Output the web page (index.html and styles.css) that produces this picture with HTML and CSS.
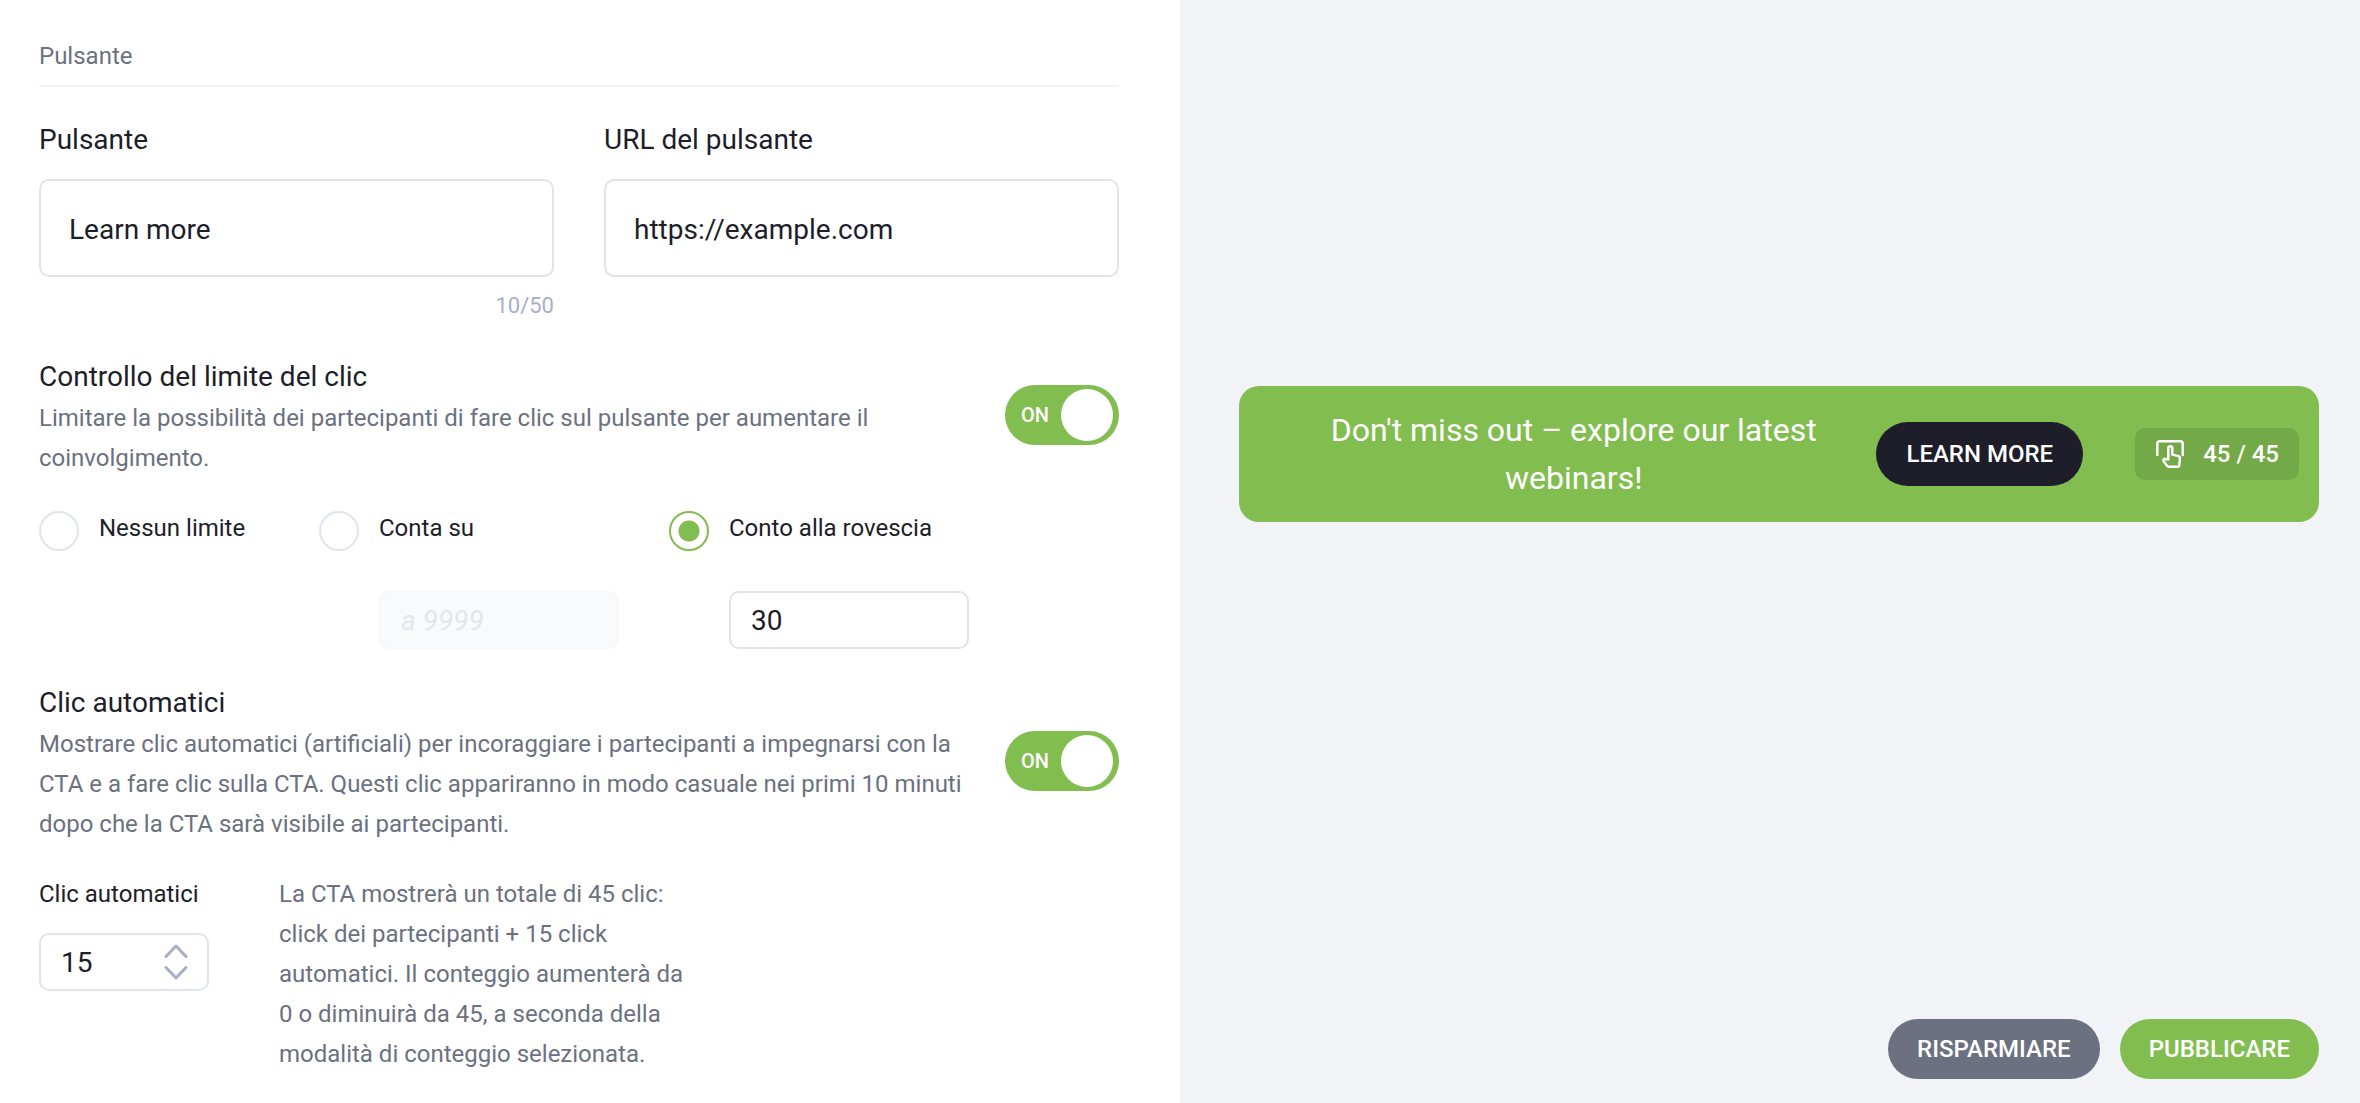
FILE: index.html
```html
<!DOCTYPE html>
<html lang="it">
<head>
<meta charset="utf-8">
<meta name="viewport" content="width=device-width, initial-scale=1">
<title>Pulsante CTA</title>
<link rel="stylesheet" href="styles.css">
</head>
<body>
<div class="layout">
  <main class="settings">
    <h1 class="section-title">Pulsante</h1>

    <div class="fields">
      <div class="field">
        <label class="field-label" for="btn-text">Pulsante</label>
        <input class="input input-large" id="btn-text" type="text" value="Learn more" maxlength="50">
        <p class="counter">10/50</p>
      </div>
      <div class="field">
        <label class="field-label" for="btn-url">URL del pulsante</label>
        <input class="input input-large" id="btn-url" type="text" value="https://example.com">
      </div>
    </div>

    <section class="option">
      <div class="option-text">
        <h2 class="option-title" id="limit-title">Controllo del limite del clic</h2>
        <p class="note">Limitare la possibilità dei partecipanti di fare clic sul pulsante per aumentare il coinvolgimento.</p>
      </div>
      <label class="toggle">
        <input class="toggle-input" type="checkbox" role="switch" aria-labelledby="limit-title" checked>
        <span class="toggle-text">ON</span>
        <span class="toggle-knob"></span>
      </label>
    </section>

    <div class="modes">
      <div class="mode">
        <input class="radio" type="radio" name="mode" id="mode-none">
        <label class="mode-label" for="mode-none">Nessun limite</label>
      </div>
      <div class="mode">
        <input class="radio" type="radio" name="mode" id="mode-up">
        <label class="mode-label" for="mode-up">Conta su</label>
        <input class="input input-small mode-value" type="text" placeholder="a 9999" aria-label="Conta su" disabled>
      </div>
      <div class="mode">
        <input class="radio" type="radio" name="mode" id="mode-down" checked>
        <label class="mode-label" for="mode-down">Conto alla rovescia</label>
        <input class="input input-small mode-value" type="text" value="30" aria-label="Conto alla rovescia">
      </div>
    </div>

    <section class="option">
      <div class="option-text">
        <h2 class="option-title" id="auto-title">Clic automatici</h2>
        <p class="note">Mostrare clic automatici (artificiali) per incoraggiare i partecipanti a impegnarsi con la CTA e a fare clic sulla CTA. Questi clic appariranno in modo casuale nei primi 10 minuti dopo che la CTA sarà visibile ai partecipanti.</p>
      </div>
      <label class="toggle">
        <input class="toggle-input" type="checkbox" role="switch" aria-labelledby="auto-title" checked>
        <span class="toggle-text">ON</span>
        <span class="toggle-knob"></span>
      </label>
    </section>

    <div class="auto">
      <div class="auto-field">
        <label class="auto-label" for="auto-clicks">Clic automatici</label>
        <div class="stepper">
          <input class="stepper-input" id="auto-clicks" type="text" inputmode="numeric" value="15">
          <div class="stepper-buttons">
            <button class="stepper-button" type="button" aria-label="Aumenta">
              <svg width="24" height="14" viewBox="0 0 24 14"><path d="M2 12.500 12 2l10 10.500"/></svg>
            </button>
            <button class="stepper-button" type="button" aria-label="Diminuisci">
              <svg width="24" height="14" viewBox="0 0 24 14"><path d="M2 1.500 12 12l10-10.500"/></svg>
            </button>
          </div>
        </div>
      </div>
      <p class="note auto-note">La CTA mostrerà un totale di 45 clic: click dei partecipanti + 15 click automatici. Il conteggio aumenterà da 0 o diminuirà da 45, a seconda della modalità di conteggio selezionata.</p>
    </div>
  </main>

  <aside class="preview">
    <div class="banner">
      <p class="banner-text">Don't miss out – explore our latest webinars!</p>
      <button class="banner-button" type="button">LEARN MORE</button>
      <div class="clicks">
        <svg class="clicks-icon" width="30" height="30" viewBox="0 0 30 30" aria-hidden="true">
          <path d="M2.300 16V4.600a2.300 2.300 0 0 1 2.300-2.300h20.800a2.300 2.300 0 0 1 2.300 2.300V16"/>
          <path d="M13.300 20.500V9.300a2 2 0 0 1 4 0v6.200l5.600 1.400a2.500 2.500 0 0 1 2 2.700l-.6 6.700a1.700 1.700 0 0 1-1.700 1.500h-8.300a3 3 0 0 1-2.200-1l-3.300-4.200a1.600 1.600 0 0 1 2.100-2.400z"/>
        </svg>
        <span>45 / 45</span>
      </div>
    </div>
    <div class="actions">
      <button class="action action-save" type="button">RISPARMIARE</button>
      <button class="action action-publish" type="button">PUBBLICARE</button>
    </div>
  </aside>
</div>
</body>
</html>
```
FILE: styles.css
```css
:root {
  --green: #82bd50;
  --ink: #1d1e2a;
  --muted: #6b7181;
  --line: #e1e3ee;
  --pale: #a8aec8;
  --canvas: #f1f3f7;
}

*,
*::before,
*::after {
  box-sizing: border-box;
}

body {
  margin: 0;
  background: #fff;
  color: var(--ink);
  font-family: Roboto, "Liberation Sans", sans-serif;
  font-size: 24px;
  line-height: 40px;
}

h1,
h2,
p {
  margin: 0;
  font-weight: 400;
}

input,
button {
  margin: 0;
  font-family: inherit;
}

button {
  border: 0;
  cursor: pointer;
}

.layout {
  display: grid;
  grid-template-columns: 1fr 1fr;
  min-height: 100vh;
}

.settings {
  padding: 36px 61px 24px 39px;
}

.section-title {
  padding-bottom: 9px;
  border-bottom: 2px solid var(--canvas);
  color: var(--muted);
  font-size: 24px;
}

/* Text fields */

.fields {
  display: grid;
  grid-template-columns: 1fr 1fr;
  gap: 50px;
  margin-top: 32px;
}

.field-label,
.option-title {
  display: block;
  font-size: 28px;
  line-height: 42px;
}

.input {
  display: block;
  width: 100%;
  border: 2px solid var(--line);
  border-radius: 10px;
  background: #fff;
  color: var(--ink);
  font-size: 28px;
}

.input-large {
  height: 98px;
  margin-top: 18px;
  padding: 2px 28px 0;
}

.input-small {
  height: 58px;
  padding: 0 20px;
}

.input:disabled {
  border-color: #f6f7f9;
  background: #f9fafc;
}

.input::placeholder {
  color: #e4e6ec;
  font-style: italic;
}

.counter {
  margin-top: 9px;
  color: var(--pale);
  font-size: 22px;
  text-align: right;
}

/* Options with a switch */

.option {
  display: flex;
  align-items: center;
  justify-content: space-between;
  gap: 32px;
  margin-top: 30px;
}

.option-text {
  max-width: 934px;
}

.note {
  color: var(--muted);
}

.toggle {
  display: flex;
  flex: none;
  align-items: center;
  justify-content: space-between;
  width: 114px;
  height: 60px;
  margin-bottom: 4px;
  padding: 0 6px 0 16px;
  border-radius: 30px;
  background: var(--green);
  color: #fff;
  font-size: 20px;
  font-weight: 500;
  cursor: pointer;
}

.toggle-input {
  position: absolute;
  opacity: 0;
}

.toggle-knob {
  width: 52px;
  height: 52px;
  border-radius: 50%;
  background: #fff;
}

/* Limit modes */

.modes {
  display: grid;
  grid-template-columns: 230px 300px 300px;
  gap: 50px;
  margin-top: 30px;
  padding-bottom: 3px;
}

.mode {
  display: grid;
  grid-template-columns: 40px 1fr;
  gap: 40px 20px;
  align-content: start;
}

.radio {
  appearance: none;
  width: 40px;
  height: 40px;
  margin-top: 3px;
  border: 2px solid var(--line);
  border-radius: 50%;
  background: #fff;
}

.radio:checked {
  border-color: var(--green);
  background: radial-gradient(circle, var(--green) 10px, #fff 11px);
}

.mode-label {
  height: 40px;
}

.mode-value {
  grid-column: 2;
}

/* Automatic clicks */

.auto {
  display: flex;
  gap: 70px;
  margin-top: 30px;
}

.auto-field {
  width: 170px;
}

.auto-label {
  display: block;
}

.auto-note {
  max-width: 410px;
}

.stepper {
  display: flex;
  align-items: center;
  height: 58px;
  margin-top: 19px;
  padding: 0 19px 0 20px;
  border: 2px solid var(--line);
  border-radius: 10px;
}

.stepper-input {
  flex: 1;
  min-width: 0;
  padding: 0;
  border: 0;
  background: none;
  color: var(--ink);
  font-size: 28px;
}

.stepper-buttons {
  display: grid;
  gap: 8px;
}

.stepper-button {
  display: block;
  height: 14px;
  padding: 0;
  background: none;
}

.stepper-button svg {
  display: block;
  fill: none;
  stroke: var(--pale);
  stroke-width: 3;
  stroke-linecap: round;
  stroke-linejoin: round;
}

/* Preview */

.preview {
  display: flex;
  flex-direction: column;
  justify-content: space-between;
  gap: 40px;
  padding: 386px 41px 24px 59px;
  background: var(--canvas);
}

.banner {
  display: flex;
  align-items: center;
  padding: 20px 20px 20px 32px;
  border-radius: 20px;
  background: var(--green);
  color: #fff;
}

.banner-text {
  flex: 1;
  font-size: 32px;
  line-height: 48px;
  text-align: center;
}

.banner-button {
  height: 64px;
  margin-right: 52px;
  padding: 0 30px;
  border-radius: 32px;
  background: var(--ink);
  color: #fff;
  font-size: 24px;
  font-weight: 500;
}

.clicks {
  display: flex;
  align-items: center;
  gap: 18px;
  height: 52px;
  padding: 0 20px;
  border-radius: 10px;
  background: #74a947;
  font-weight: 500;
}

.clicks-icon {
  fill: none;
  stroke: #fff;
  stroke-width: 2.500;
  stroke-linecap: round;
  stroke-linejoin: round;
}

.actions {
  display: flex;
  justify-content: flex-end;
  gap: 20px;
}

.action {
  height: 60px;
  padding: 0 29px;
  border-radius: 30px;
  color: #fff;
  font-size: 24px;
  font-weight: 500;
}

.action-save {
  background: var(--muted);
}

.action-publish {
  background: var(--green);
}
```
